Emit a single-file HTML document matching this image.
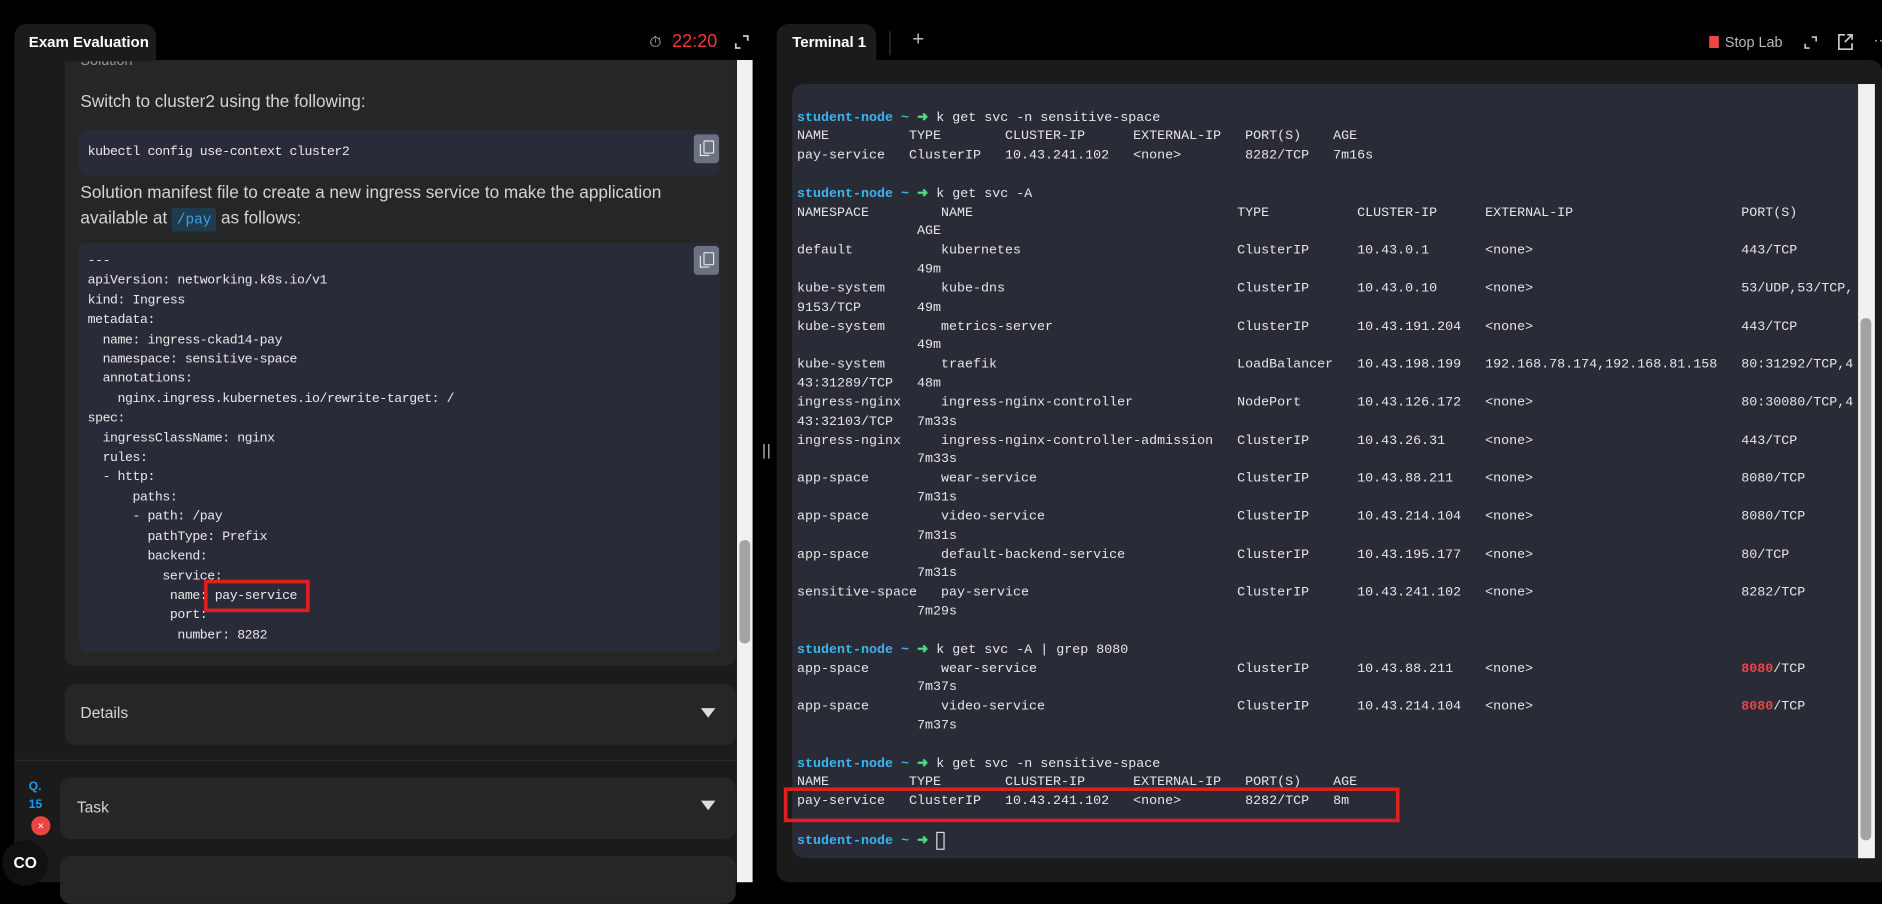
<!DOCTYPE html>
<html><head><meta charset="utf-8"><style>
*{margin:0;padding:0;box-sizing:border-box}
html,body{width:1882px;height:882px;overflow:hidden;background:#000}
#w{position:absolute;left:0;top:0;width:1568px;height:735px;transform:scale(1.2003);transform-origin:0 0;font-family:"Liberation Sans",sans-serif}
.abs{position:absolute}
.tab{position:absolute;background:#1b1b1b;border-radius:10px 10px 0 0;color:#fff;font-weight:bold;font-size:12.5px;padding-top:8px}
.card{position:absolute;background:#262626;border-radius:9px}
.code{position:absolute;background:#292c38;border-radius:6px;font-family:"Liberation Mono",monospace;font-size:11px;letter-spacing:-0.37px;color:#e8e8e8;white-space:pre}
.copy{position:absolute;width:21px;height:24px;background:#6b7280;border-radius:3px}
.copy:before{content:"";position:absolute;left:8px;top:5px;width:7px;height:9px;border:1.3px solid #e5e5e5;border-radius:1px}
.copy:after{content:"";position:absolute;left:5px;top:8px;width:7px;height:9px;border-left:1.3px solid #e5e5e5;border-bottom:1.3px solid #e5e5e5}
.p{position:absolute;color:#d4d4d4;font-size:14.3px}
.tri{position:absolute;width:0;height:0;border-left:6px solid transparent;border-right:6px solid transparent;border-top:8px solid #ddd}
#term{position:absolute;left:660px;top:70px;width:888px;height:645px;background:#292b37;border-radius:10px 0 0 10px;font-family:"Liberation Mono",monospace;font-size:11.11px;color:#e6e6e6;overflow:hidden}
#tl{position:absolute;left:4px;top:21.5px}
.l{height:15.84px;line-height:15.84px;white-space:pre}
.l span{display:inline-block;white-space:pre}
.pr{color:#3bb4f2;font-weight:bold}
.ar{color:#4ade80;font-weight:bold}
.r{color:#ef4444;font-weight:bold}
</style></head><body><div id="w">

<!-- LEFT -->
<div class="abs" style="left:12px;top:50px;width:602px;height:685px;background:#1b1b1b"></div>
<div class="card" style="left:54px;top:50px;width:559px;height:505px;border-radius:0 0 9px 9px;overflow:hidden"><div style="position:absolute;left:13px;top:-7px;color:#999;font-size:12px">Solution</div></div>
<div class="tab" style="left:12px;top:20px;width:118px;height:31px;padding-left:12px">Exam Evaluation</div>
<div class="abs" style="left:541px;top:27px;color:#ccc;font-size:13px">⏱</div>
<div class="abs" style="left:560px;top:26px;color:#ef3b3b;font-size:15px">22:20</div>
<svg class="abs" style="left:612px;top:29px" width="12" height="12" viewBox="0 0 12 12"><path d="M7 1h4v4M5 11H1V7" stroke="#ccc" stroke-width="1.5" fill="none"/></svg>

<div class="p" style="left:67px;top:77px">Switch to cluster2 using the following:</div>
<div class="code" style="left:66px;top:108px;width:534px;height:38px;padding:6px 7px;line-height:26px">kubectl config use-context cluster2</div>
<div class="copy" style="left:578px;top:112px"></div>
<div class="p" style="left:67px;top:151px;line-height:21px;width:520px">Solution manifest file to create a new ingress service to make the application<br>available at <span style="background:#1f3b4d;color:#35a3ee;font-family:'Liberation Mono',monospace;font-size:12px;padding:3px 4px;border-radius:2px">/pay</span> as follows:</div>
<div class="code" style="left:66px;top:202px;width:534px;height:341px;padding:8px 7px;line-height:16.4px">---
apiVersion: networking.k8s.io/v1
kind: Ingress
metadata:
  name: ingress-ckad14-pay
  namespace: sensitive-space
  annotations:
    nginx.ingress.kubernetes.io/rewrite-target: /
spec:
  ingressClassName: nginx
  rules:
  - http:
      paths:
      - path: /pay
        pathType: Prefix
        backend:
          service:
           name: pay-service
           port:
            number: 8282</div>
<div class="copy" style="left:578px;top:205px"></div>
<div class="abs" style="left:170px;top:483px;width:88px;height:27px;border:3px solid #e01e1e"></div>

<div class="card" style="left:54px;top:570px;width:559px;height:51px"></div>
<div class="p" style="left:67px;top:586px;font-size:13px">Details</div>
<div class="tri" style="left:584px;top:590px"></div>
<div class="abs" style="left:12px;top:633px;width:602px;height:1px;background:#2c2c2c"></div>
<div class="abs" style="left:24px;top:648px;color:#1e9bf0;font-size:10px;font-weight:bold;line-height:15px">Q.<br>15</div>
<div class="abs" style="left:26px;top:680px;width:16px;height:16px;border-radius:50%;background:#ef4444;color:#fff;font-size:9px;text-align:center;line-height:16px">×</div>
<div class="card" style="left:50px;top:648px;width:563px;height:51px"></div>
<div class="p" style="left:64px;top:665px;font-size:13px">Task</div>
<div class="tri" style="left:584px;top:667px"></div>
<div class="card" style="left:50px;top:713px;width:563px;height:40px"></div>
<div class="abs" style="left:2px;top:700px;width:38px;height:38px;border-radius:50%;background:#111;color:#fff;font-weight:bold;font-size:13px;text-align:center;line-height:38px">CO</div>

<div class="abs" style="left:614px;top:50px;width:13px;height:685px;background:#f1f1f1"></div>
<div class="abs" style="left:616px;top:450px;width:9px;height:86px;background:#a3a3a3;border-radius:4px"></div>
<div class="abs" style="left:636px;top:370px;width:5px;height:12px;border-left:1.5px solid #ccc;border-right:1.5px solid #ccc"></div>

<!-- RIGHT -->
<div class="tab" style="left:647px;top:20px;width:83px;height:31px;padding-left:13px">Terminal 1</div>
<div class="abs" style="left:741px;top:26px;width:1px;height:20px;background:#333"></div>
<div class="abs" style="left:760px;top:23px;color:#bbb;font-size:17px">+</div>
<div class="abs" style="left:1424px;top:30px;width:8px;height:10px;background:#ef4444"></div>
<div class="abs" style="left:1437px;top:28px;color:#bbb;font-size:12px">Stop Lab</div>
<svg class="abs" style="left:1503px;top:30px" width="11" height="11" viewBox="0 0 12 12"><path d="M7 1h4v4M5 11H1V7" stroke="#ccc" stroke-width="1.5" fill="none"/></svg>
<svg class="abs" style="left:1531px;top:28px" width="13" height="14" viewBox="0 0 13 14"><path d="M6 1H1v12h11V8M8 1h4v4M12 1 6 7" stroke="#ccc" stroke-width="1.4" fill="none"/></svg>
<div class="abs" style="left:1561px;top:26px;color:#ccc;font-size:12px">··</div>
<div class="abs" style="left:647px;top:50px;width:921px;height:685px;background:#1b1b1b;border-radius:0 10px 0 10px"></div>

<div id="term"><div id="tl">
<div class="l"><span class="pr">student-node ~</span> <span class="ar">➜</span> k get svc -n sensitive-space</div>
<div class="l"><span style="width:14ch">NAME</span><span style="width:12ch">TYPE</span><span style="width:16ch">CLUSTER-IP</span><span style="width:14ch">EXTERNAL-IP</span><span style="width:11ch">PORT(S)</span>AGE</div>
<div class="l"><span style="width:14ch">pay-service</span><span style="width:12ch">ClusterIP</span><span style="width:16ch">10.43.241.102</span><span style="width:14ch">&lt;none&gt;</span><span style="width:11ch">8282/TCP</span>7m16s</div>
<div class="l"> </div>
<div class="l"><span class="pr">student-node ~</span> <span class="ar">➜</span> k get svc -A</div>
<div class="l"><span style="width:18ch">NAMESPACE</span><span style="width:37ch">NAME</span><span style="width:15ch">TYPE</span><span style="width:16ch">CLUSTER-IP</span><span style="width:32ch">EXTERNAL-IP</span>PORT(S)</div>
<div class="l"><span style="width:15ch"></span>AGE</div>
<div class="l"><span style="width:18ch">default</span><span style="width:37ch">kubernetes</span><span style="width:15ch">ClusterIP</span><span style="width:16ch">10.43.0.1</span><span style="width:32ch">&lt;none&gt;</span>443/TCP</div>
<div class="l"><span style="width:15ch"></span>49m</div>
<div class="l"><span style="width:18ch">kube-system</span><span style="width:37ch">kube-dns</span><span style="width:15ch">ClusterIP</span><span style="width:16ch">10.43.0.10</span><span style="width:32ch">&lt;none&gt;</span>53/UDP,53/TCP,</div>
<div class="l"><span style="width:15ch">9153/TCP</span>49m</div>
<div class="l"><span style="width:18ch">kube-system</span><span style="width:37ch">metrics-server</span><span style="width:15ch">ClusterIP</span><span style="width:16ch">10.43.191.204</span><span style="width:32ch">&lt;none&gt;</span>443/TCP</div>
<div class="l"><span style="width:15ch"></span>49m</div>
<div class="l"><span style="width:18ch">kube-system</span><span style="width:37ch">traefik</span><span style="width:15ch">LoadBalancer</span><span style="width:16ch">10.43.198.199</span><span style="width:32ch">192.168.78.174,192.168.81.158</span>80:31292/TCP,4</div>
<div class="l"><span style="width:15ch">43:31289/TCP</span>48m</div>
<div class="l"><span style="width:18ch">ingress-nginx</span><span style="width:37ch">ingress-nginx-controller</span><span style="width:15ch">NodePort</span><span style="width:16ch">10.43.126.172</span><span style="width:32ch">&lt;none&gt;</span>80:30080/TCP,4</div>
<div class="l"><span style="width:15ch">43:32103/TCP</span>7m33s</div>
<div class="l"><span style="width:18ch">ingress-nginx</span><span style="width:37ch">ingress-nginx-controller-admission</span><span style="width:15ch">ClusterIP</span><span style="width:16ch">10.43.26.31</span><span style="width:32ch">&lt;none&gt;</span>443/TCP</div>
<div class="l"><span style="width:15ch"></span>7m33s</div>
<div class="l"><span style="width:18ch">app-space</span><span style="width:37ch">wear-service</span><span style="width:15ch">ClusterIP</span><span style="width:16ch">10.43.88.211</span><span style="width:32ch">&lt;none&gt;</span>8080/TCP</div>
<div class="l"><span style="width:15ch"></span>7m31s</div>
<div class="l"><span style="width:18ch">app-space</span><span style="width:37ch">video-service</span><span style="width:15ch">ClusterIP</span><span style="width:16ch">10.43.214.104</span><span style="width:32ch">&lt;none&gt;</span>8080/TCP</div>
<div class="l"><span style="width:15ch"></span>7m31s</div>
<div class="l"><span style="width:18ch">app-space</span><span style="width:37ch">default-backend-service</span><span style="width:15ch">ClusterIP</span><span style="width:16ch">10.43.195.177</span><span style="width:32ch">&lt;none&gt;</span>80/TCP</div>
<div class="l"><span style="width:15ch"></span>7m31s</div>
<div class="l"><span style="width:18ch">sensitive-space</span><span style="width:37ch">pay-service</span><span style="width:15ch">ClusterIP</span><span style="width:16ch">10.43.241.102</span><span style="width:32ch">&lt;none&gt;</span>8282/TCP</div>
<div class="l"><span style="width:15ch"></span>7m29s</div>
<div class="l"> </div>
<div class="l"><span class="pr">student-node ~</span> <span class="ar">➜</span> k get svc -A | grep 8080</div>
<div class="l"><span style="width:18ch">app-space</span><span style="width:37ch">wear-service</span><span style="width:15ch">ClusterIP</span><span style="width:16ch">10.43.88.211</span><span style="width:32ch">&lt;none&gt;</span><span class="r">8080</span>/TCP</div>
<div class="l"><span style="width:15ch"></span>7m37s</div>
<div class="l"><span style="width:18ch">app-space</span><span style="width:37ch">video-service</span><span style="width:15ch">ClusterIP</span><span style="width:16ch">10.43.214.104</span><span style="width:32ch">&lt;none&gt;</span><span class="r">8080</span>/TCP</div>
<div class="l"><span style="width:15ch"></span>7m37s</div>
<div class="l"> </div>
<div class="l"><span class="pr">student-node ~</span> <span class="ar">➜</span> k get svc -n sensitive-space</div>
<div class="l"><span style="width:14ch">NAME</span><span style="width:12ch">TYPE</span><span style="width:16ch">CLUSTER-IP</span><span style="width:14ch">EXTERNAL-IP</span><span style="width:11ch">PORT(S)</span>AGE</div>
<div class="l"><span style="width:14ch">pay-service</span><span style="width:12ch">ClusterIP</span><span style="width:16ch">10.43.241.102</span><span style="width:14ch">&lt;none&gt;</span><span style="width:11ch">8282/TCP</span>8m</div>
<div class="l"> </div>
<div class="l"><span class="pr">student-node ~</span> <span class="ar">➜</span> <span style="width:7px;height:15px;border:1px solid #ddd;vertical-align:middle"></span></div>
</div></div>
<div class="abs" style="left:653px;top:656px;width:513px;height:29px;border:3px solid #e01e1e"></div>
<div class="abs" style="left:1548px;top:70px;width:14px;height:645px;background:#f1f1f1"></div>
<div class="abs" style="left:1550px;top:265px;width:9px;height:435px;background:#a3a3a3;border-radius:4px"></div>

</div></body></html>
